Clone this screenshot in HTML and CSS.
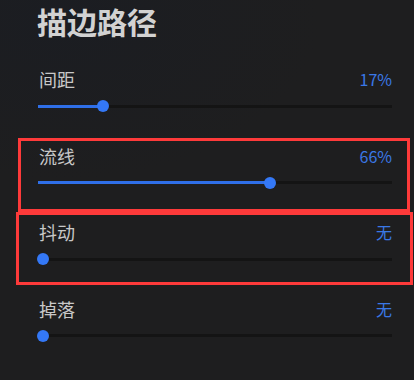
FILE: index.html
```html
<!DOCTYPE html>
<html lang="zh">
<head>
<meta charset="utf-8">
<link rel="stylesheet" href="styles.css">
</head>
<body>
<div class="panel">
  <h1 class="title">描边路径</h1>
  <div class="row">
    <div class="head"><span class="label">间距</span><span class="value">17%</span></div>
    <div class="slider"><div class="fill" style="width: 65px"></div><div class="thumb" style="left: 59px"></div></div>
  </div>
  <div class="row">
    <div class="head"><span class="label">流线</span><span class="value">66%</span></div>
    <div class="slider"><div class="fill" style="width: 232px"></div><div class="thumb" style="left: 226px"></div></div>
  </div>
  <div class="row">
    <div class="head"><span class="label">抖动</span><span class="value">无</span></div>
    <div class="slider"><div class="fill" style="width: 5px"></div><div class="thumb" style="left: -1px"></div></div>
  </div>
  <div class="row">
    <div class="head"><span class="label">掉落</span><span class="value">无</span></div>
    <div class="slider"><div class="fill" style="width: 5px"></div><div class="thumb" style="left: -1px"></div></div>
  </div>
</div>
<div class="mark mark-a"></div>
<div class="mark mark-b"></div>
</body>
</html>
```
FILE: styles.css
```css
html, body {
  margin: 0;
  padding: 0;
}
body {
  width: 414px;
  height: 380px;
  position: relative;
  overflow: hidden;
  background: radial-gradient(ellipse 260px 160px at 60px 20px, #1b1d22 0%, #1e1e1f 100%), #1e1e1e;
  font-family: "Noto Sans CJK SC", "Noto Sans", sans-serif;
}
.panel {
  padding: 0 22px 0 38px;
  display: flex;
  flex-direction: column;
}
.title {
  margin: 1px 0 26px -1px;
  font-size: 30px;
  line-height: 40px;
  font-weight: 700;
  color: #d2d2d2;
}
.row {
  display: flex;
  flex-direction: column;
  gap: 9px;
  margin-bottom: 31.5px;
}
.head {
  display: flex;
  justify-content: space-between;
  align-items: center;
  height: 24px;
}
.label {
  font-size: 18px;
  line-height: 24px;
  color: #c8c8c8;
  margin-left: 1px;
}
.value {
  font-size: 16px;
  line-height: 24px;
  color: #3a78e6;
}
.slider {
  position: relative;
  height: 12px;
}
.slider::before {
  content: "";
  position: absolute;
  left: 0;
  right: 0;
  top: 4.5px;
  height: 3px;
  background: #141414;
}
.fill {
  position: absolute;
  left: 0;
  top: 4.5px;
  height: 3px;
  background: #2f6fe8;
}
.thumb {
  position: absolute;
  top: 0;
  width: 12px;
  height: 12px;
  border-radius: 50%;
  background: #3478f6;
}
.mark {
  position: absolute;
  box-sizing: border-box;
  border: 3px solid #fe3a3a;
}
.mark-a {
  left: 18px;
  top: 138px;
  width: 392px;
  height: 74px;
}
.mark-b {
  left: 16px;
  top: 212px;
  width: 397px;
  height: 73px;
}
```
